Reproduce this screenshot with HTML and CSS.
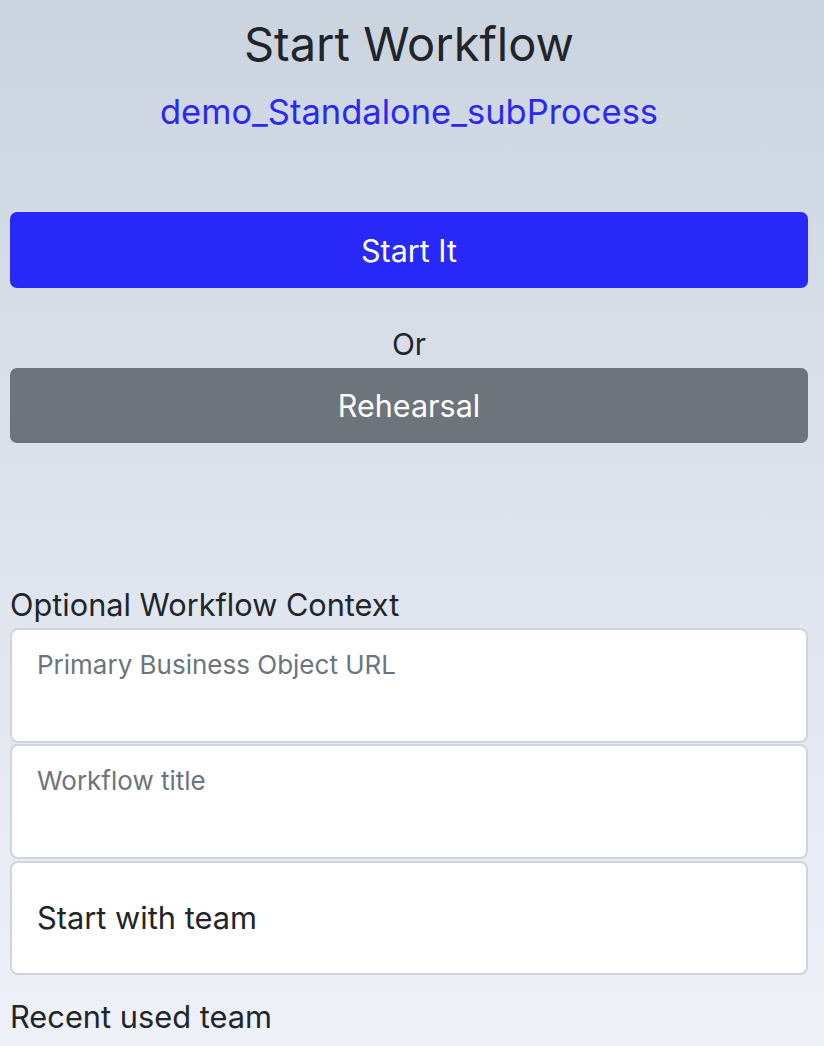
FILE: index.html
```html
<!DOCTYPE html>
<html lang="en">
<head>
<meta charset="utf-8">
<title>Start Workflow</title>
<link rel="stylesheet" href="styles.css">
</head>
<body>
<main class="page">
  <header class="head">
    <h1 class="title">Start Workflow</h1>
    <div class="subtitle">demo_Standalone_subProcess</div>
  </header>
  <button class="btn btn-primary" type="button">Start It</button>
  <div class="or">Or</div>
  <button class="btn btn-secondary" type="button">Rehearsal</button>
  <div class="section-label">Optional Workflow Context</div>
  <div class="fields">
    <textarea class="field field-first" placeholder="Primary Business Object URL"></textarea>
    <textarea class="field field-second" placeholder="Workflow title"></textarea>
    <div class="field field-team">Start with team</div>
  </div>
  <div class="recent-label">Recent used team</div>
</main>
</body>
</html>
```
FILE: styles.css
```css
html, body {
  margin: 0;
  padding: 0;
}
body {
  min-height: 1046px;
  background: linear-gradient(to bottom, #cad4df 0%, #dce2ec 45%, #eef1f8 100%);
  font-family: "Inter", "Noto Sans", "Liberation Sans", sans-serif;
  color: #212529;
  overflow: hidden;
}
.page {
  display: flex;
  flex-direction: column;
  padding: 0 16px 0 10px;
}
.head {
  text-align: center;
  display: flex;
  flex-direction: column;
}
.title {
  margin: 14px 0 0;
  font-size: 47px;
  font-weight: 400;
  line-height: 60px;
  color: #212529;
}
.subtitle {
  margin-top: 16px;
  font-size: 34.5px;
  line-height: 44px;
  color: #2a28f2;
}
.btn {
  display: flex;
  align-items: center;
  justify-content: center;
  width: 100%;
  border: none;
  border-radius: 7px;
  font-family: inherit;
  font-size: 30.5px;
  color: #ffffff;
  padding: 0;
}
.btn-primary {
  margin-top: 78px;
  height: 76px;
  background: #2828f8;
}
.btn-secondary {
  height: 75px;
  background: #6e747c;
}
.or {
  margin-top: 32px;
  text-align: center;
  font-size: 30px;
  line-height: 48px;
}
.section-label {
  margin-top: 142px;
  font-size: 30.7px;
  line-height: 40px;
}
.fields {
  margin-top: 3px;
  display: flex;
  flex-direction: column;
}
.field {
  box-sizing: border-box;
  width: 100%;
  border: 2px solid #d0d5db;
  border-radius: 8px;
  background: #ffffff;
  font-family: inherit;
  font-size: 26px;
  line-height: 38px;
  padding: 16px 25px;
  color: #212529;
  resize: none;
  outline: none;
  margin: 0;
}
.field::placeholder {
  color: #6c757d;
  opacity: 1;
}
.field-first {
  height: 115px;
}
.field-second {
  margin-top: 1px;
  height: 115px;
}
.field-team {
  margin-top: 2px;
  height: 114px;
  display: flex;
  align-items: center;
  padding-top: 0;
  padding-bottom: 0;
  font-size: 30.8px;
}
.recent-label {
  margin-top: 22px;
  font-size: 30.8px;
  line-height: 40px;
}
```
